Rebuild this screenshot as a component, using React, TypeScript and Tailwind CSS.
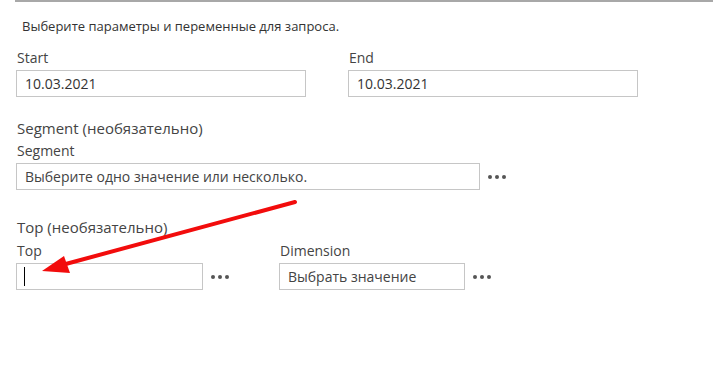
import React from "react";

const Field = ({
  label,
  value,
  width,
  placeholder,
  caret,
}: {
  label: string;
  value?: string;
  width: string;
  placeholder?: string;
  caret?: boolean;
}) => (
  <div className="flex flex-col">
    <span className="text-[14px] leading-[18px] text-[#444] pl-px">{label}</span>
    <div
      className={`${width} mt-[3px] h-[27px] border border-[#c6c6c6] flex items-center px-2 text-[14px] text-[#333]`}
    >
      {caret && <span className="w-px h-[19px] bg-black ml-[-1px]" />}
      {value}
      {placeholder && <span className="text-[#444]">{placeholder}</span>}
    </div>
  </div>
);

const Dots = () => (
  <div className="flex gap-[3px] items-center mt-[21px] px-2 h-[27px]">
    <span className="w-[4px] h-[4px] rounded-full bg-[#555]" />
    <span className="w-[4px] h-[4px] rounded-full bg-[#555]" />
    <span className="w-[4px] h-[4px] rounded-full bg-[#555]" />
  </div>
);

export default function App() {
  return (
    <div className="relative w-[713px] h-[373px] bg-white overflow-hidden font-['Open_Sans',sans-serif]">
      <div className="ml-[15px] border-t-2 border-[#a8a8a8]" />
      <div className="pl-4">
        <p className="pt-[15px] pl-[6px] text-[13px] leading-[18px] text-[#333]">
          Выберите параметры и переменные для запроса.
        </p>

        <div className="mt-[14px] flex gap-[42px]">
          <Field label="Start" value="10.03.2021" width="w-[290px]" />
          <Field label="End" value="10.03.2021" width="w-[290px]" />
        </div>

        <p className="mt-[21px] text-[15px] leading-[20px] text-[#444] pl-px">
          Segment (необязательно)
        </p>
        <div className="mt-[4px] flex">
          <Field
            label="Segment"
            width="w-[464px]"
            placeholder="Выберите одно значение или несколько."
          />
          <Dots />
        </div>

        <p className="mt-[27px] text-[15px] leading-[20px] text-[#444] pl-px">
          Top (необязательно)
        </p>
        <div className="mt-[5px] flex">
          <Field label="Top" width="w-[187px]" caret />
          <Dots />
          <div className="ml-[42px] flex">
            <Field label="Dimension" width="w-[186px]" placeholder="Выбрать значение" />
            <Dots />
          </div>
        </div>
      </div>

      <svg
        className="absolute left-0 top-0 pointer-events-none"
        width="713"
        height="373"
        viewBox="0 0 713 373"
      >
        <line
          x1="295"
          y1="202"
          x2="62"
          y2="265"
          stroke="#f20c0c"
          strokeWidth="4"
          strokeLinecap="round"
        />
        <polygon points="42,271 64,256 70,273" fill="#f20c0c" />
      </svg>
    </div>
  );
}
